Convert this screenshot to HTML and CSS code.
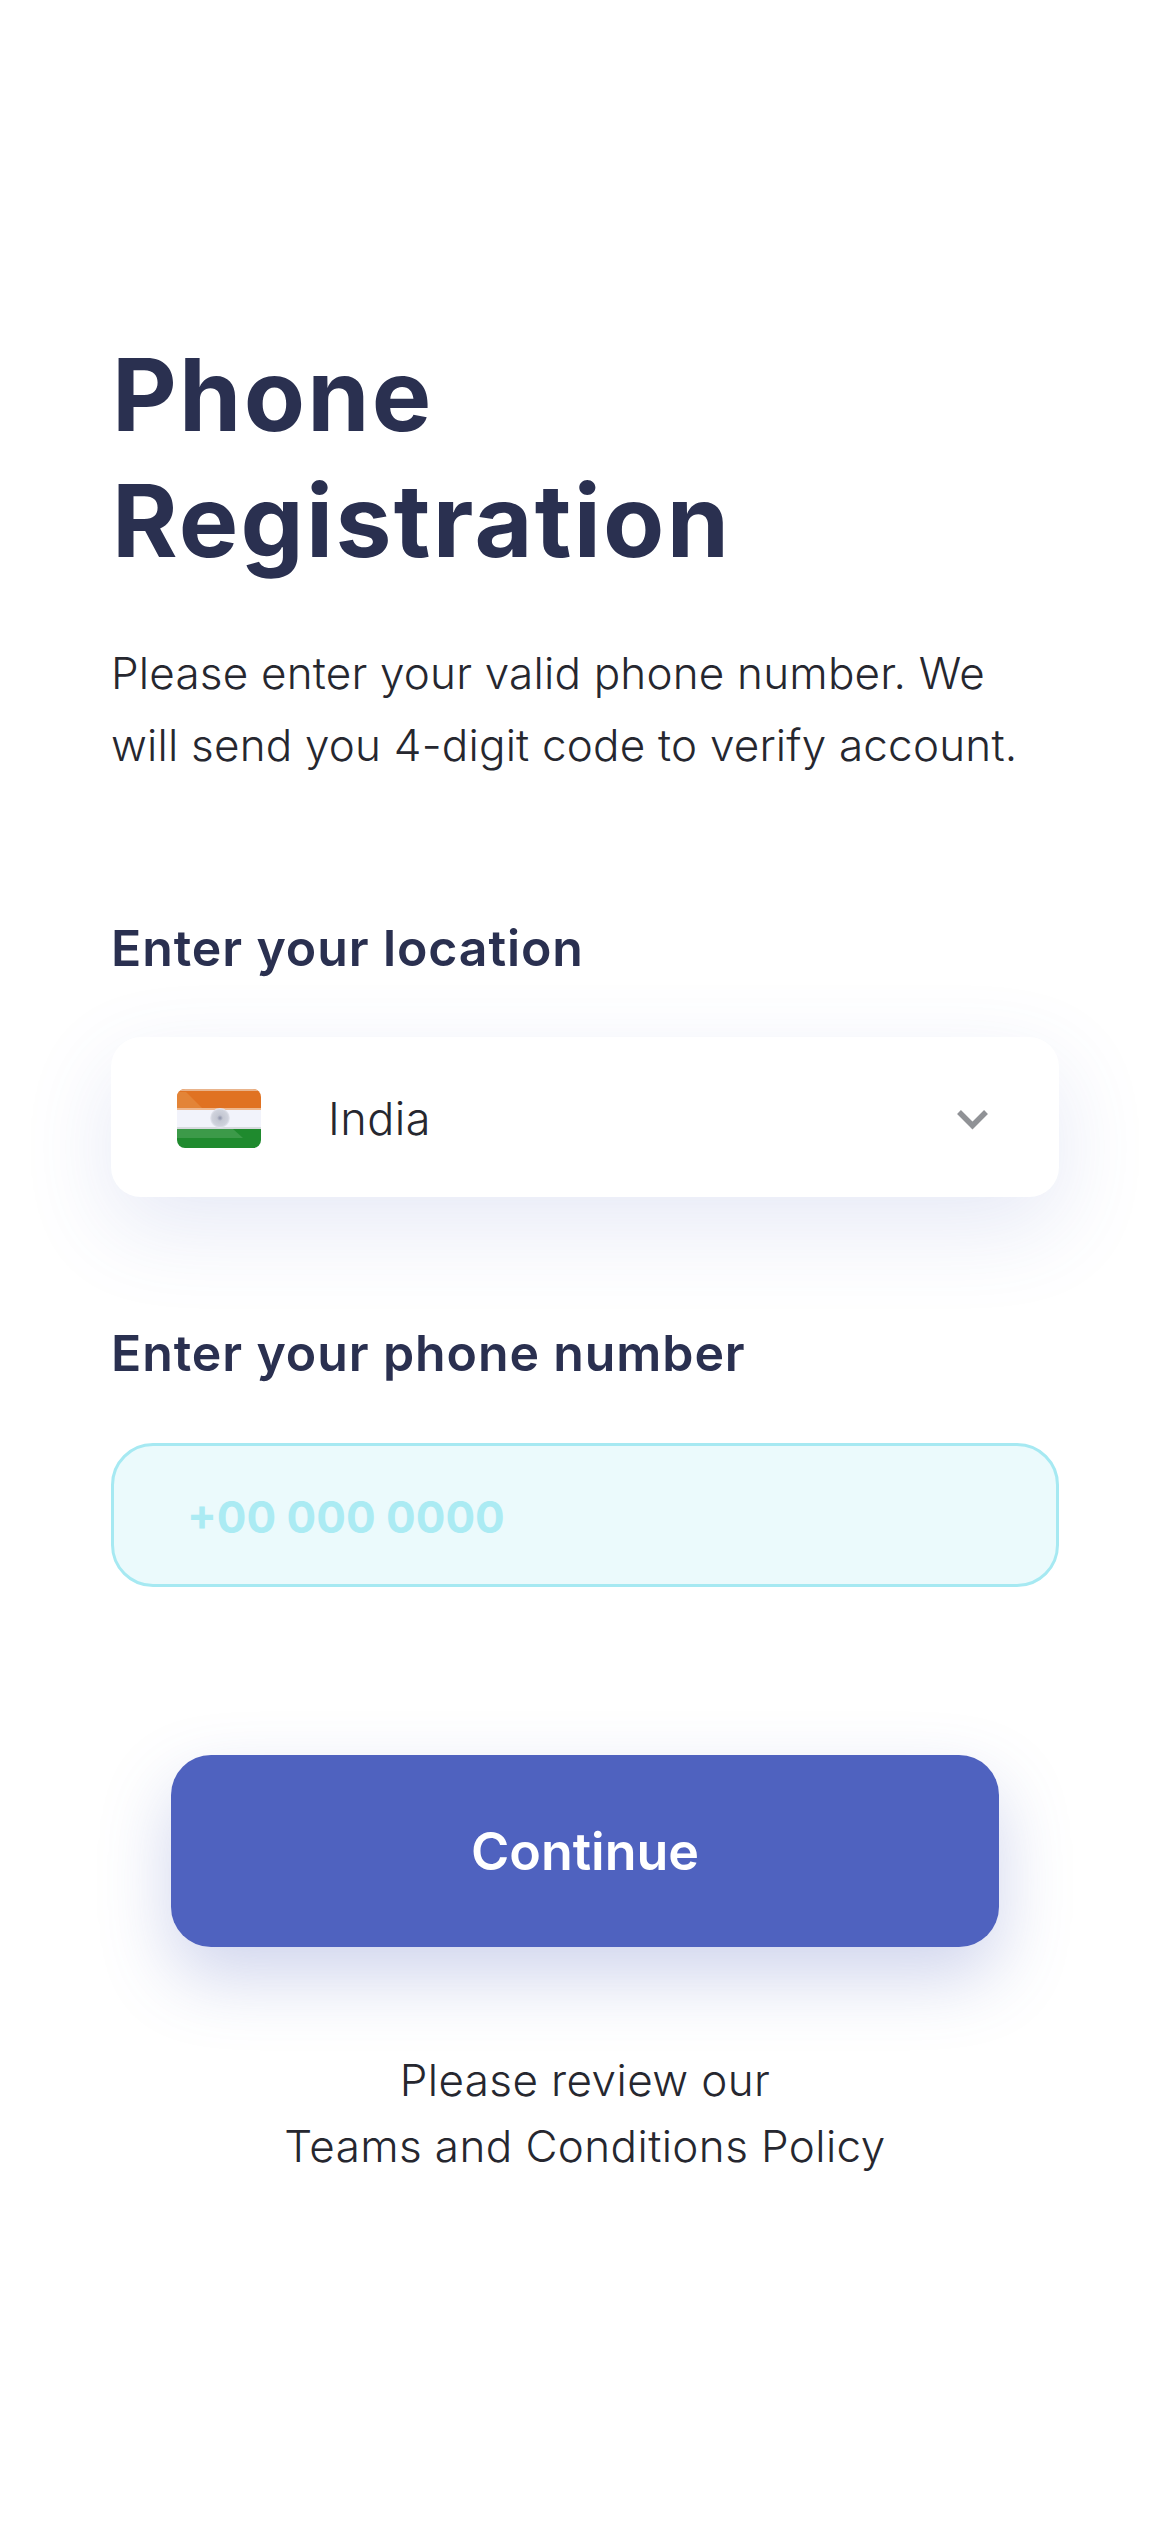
FILE: index.html
```html
<!DOCTYPE html>
<html lang="en">
<head>
<meta charset="utf-8">
<title>Phone Registration</title>
<link rel="stylesheet" href="styles.css">
</head>
<body>
<main class="screen">
  <h1 class="title">Phone<br>Registration</h1>
  <p class="intro">Please enter your valid phone number. We<br>will send you 4-digit code to verify account.</p>
  <h2 class="label label-location">Enter your location</h2>
  <div class="select">
    <svg class="flag" width="84" height="59" viewBox="0 0 84 59" aria-hidden="true">
      <defs>
        <clipPath id="r"><rect width="84" height="59" rx="8"/></clipPath>
        <radialGradient id="wheel"><stop offset="0" stop-color="#8b90a8"/><stop offset=".3" stop-color="#c4c7d2"/><stop offset=".8" stop-color="#cfd2dc"/><stop offset="1" stop-color="#e8e9f2"/></radialGradient>
      </defs>
      <g clip-path="url(#r)">
        <rect width="84" height="20" fill="#e07222"/>
        <path d="M0 3 L9 3 L26 20 L0 20Z" fill="#e38437"/>
        <rect width="84" height="2" fill="#e9b48c"/>
        <rect y="19" width="84" height="2" fill="#efb88e"/>
        <rect y="21" width="84" height="19" fill="#f2f3fb"/>
        <rect y="38" width="84" height="2" fill="#d8dadf"/>
        <rect y="40" width="84" height="19" fill="#1f8a2e"/>
        <path d="M0 40 H56 L66 49 H0Z" fill="#3c9a49"/>
        <circle cx="43" cy="29" r="10" fill="url(#wheel)"/>
      </g>
    </svg>
    <span class="select-text">India</span>
    <svg class="chevron" width="33" height="21" viewBox="0 0 33 21" aria-hidden="true"><path d="M3 3 L16.500 16.500 L30 3" fill="none" stroke="#909296" stroke-width="5.500"/></svg>
  </div>
  <h2 class="label label-phone">Enter your phone number</h2>
  <div class="phone"><span class="placeholder">+00 000 0000</span></div>
  <div class="action"><button class="continue" type="button">Continue</button></div>
  <p class="terms">Please review our<br>Teams and Conditions Policy</p>
</main>
</body>
</html>
```
FILE: styles.css
```css
html, body {
  margin: 0;
  padding: 0;
  background: #fff;
}
.screen {
  box-sizing: border-box;
  width: 1170px;
  height: 2532px;
  padding: 332px 111px 0;
  overflow: hidden;
  font-family: Inter, "Liberation Sans", sans-serif;
  color: #26272f;
}
.title {
  margin: 0 0 0 1px;
  font-size: 100px;
  line-height: 126px;
  font-weight: 700;
  letter-spacing: 2.3px;
  color: #2a3050;
}
.intro {
  margin: 53px 0 0;
  font-size: 44px;
  line-height: 72px;
  font-weight: 350;
  letter-spacing: .2px;
}
.label {
  margin: 0;
  font-size: 50px;
  line-height: 60px;
  font-weight: 600;
  letter-spacing: .9px;
  color: #2a3050;
}
.label-location { margin-top: 137px; }
.label-phone { margin-top: 126px; }
.select {
  display: flex;
  align-items: center;
  height: 160px;
  margin-top: 59px;
  padding: 0 70px 0 66px;
  border-radius: 30px;
  background: #fff;
  box-shadow: 0 30px 90px rgba(80, 100, 190, .14);
}
.flag { margin-top: 3px; }
.chevron { margin-top: 4px; }
.select-text {
  flex: 1;
  margin-left: 67px;
  padding-top: 3px;
  font-size: 45px;
  font-weight: 350;
  letter-spacing: .5px;
}
.phone {
  display: flex;
  align-items: center;
  box-sizing: border-box;
  height: 144px;
  margin-top: 60px;
  padding: 3px 0 0 73px;
  border: 3px solid #a6e9f2;
  border-radius: 42px;
  background: #ebfafc;
}
.placeholder {
  font-size: 44px;
  font-weight: 700;
  color: #abebf3;
}
.action {
  display: flex;
  justify-content: center;
  margin-top: 168px;
}
.continue {
  width: 828px;
  height: 192px;
  border: 0;
  border-radius: 40px;
  background: #4f62bf;
  box-shadow: 0 30px 70px rgba(80, 98, 190, .27);
  color: #fff;
  font-family: inherit;
  font-size: 52px;
  font-weight: 600;
}
.terms {
  margin: 100px 0 0;
  text-align: center;
  font-size: 44px;
  font-weight: 350;
  letter-spacing: .4px;
  line-height: 66px;
}
```
